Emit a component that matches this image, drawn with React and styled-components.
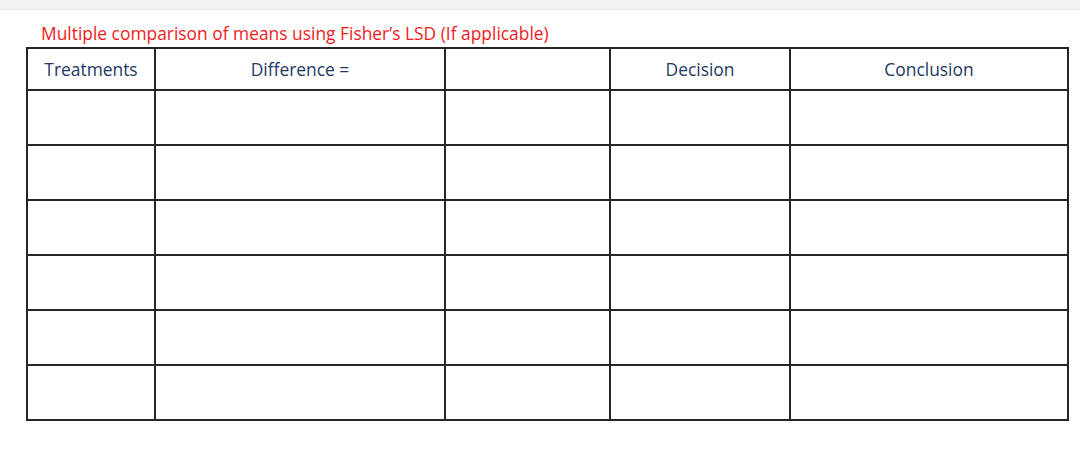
import React from 'react';
import styled, { createGlobalStyle } from 'styled-components';

const GlobalStyle = createGlobalStyle`
  *, *::before, *::after { box-sizing: border-box; }
  html, body { margin: 0; padding: 0; background: #ffffff; }
  body {
    font-family: 'Open Sans', 'Liberation Sans', sans-serif;
    color: #1f3864;
  }
`;

const TopStrip = styled.div`
  height: 10px;
  background: #f2f2f2;
  border-bottom: 1px solid #ececec;
`;

const Page = styled.main`
  padding: 12px 13px 0 26px;
`;

const Caption = styled.h2`
  margin: 0 0 3px 15px;
  font-family: 'Open Sans', 'Liberation Sans', sans-serif;
  font-weight: 400;
  font-size: 17.4px;
  line-height: 22px;
  color: #f21b1b;
`;

const Grid = styled.table`
  width: 1041px;
  border-collapse: collapse;
  table-layout: fixed;
  border: 2px solid #262626;
`;

const Head = styled.th`
  height: 42px;
  padding: 0;
  border: 2px solid #262626;
  font-weight: 400;
  font-size: 17.4px;
  text-align: center;
  color: #1f3864;
`;

const Cell = styled.td`
  height: 55px;
  padding: 0;
  border: 2px solid #262626;
`;

const columns = [
  { label: 'Treatments', width: 128 },
  { label: 'Difference =', width: 290 },
  { label: '', width: 165 },
  { label: 'Decision', width: 180 },
  { label: 'Conclusion', width: 278 },
];

const rows = [0, 1, 2, 3, 4, 5];

export default function App() {
  return (
    <>
      <GlobalStyle />
      <TopStrip />
      <Page>
        <Caption>Multiple comparison of means using Fisher’s LSD (If applicable)</Caption>
        <Grid>
          <colgroup>
            {columns.map((c, i) => <col key={i} style={{ width: c.width }} />)}
          </colgroup>
          <thead>
            <tr>
              {columns.map((c, i) => <Head key={i}>{c.label}</Head>)}
            </tr>
          </thead>
          <tbody>
            {rows.map(r => (
              <tr key={r}>
                {columns.map((c, i) => <Cell key={i} />)}
              </tr>
            ))}
          </tbody>
        </Grid>
      </Page>
    </>
  );
}
